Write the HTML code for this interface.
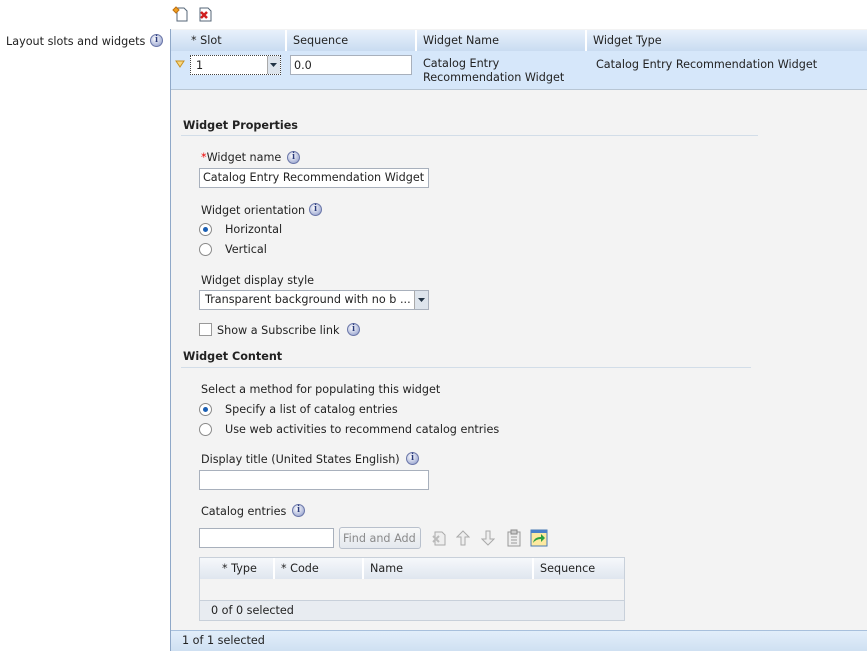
<!DOCTYPE html>
<html><head><meta charset="utf-8"><style>
*{margin:0;padding:0;box-sizing:border-box}
body{width:867px;height:651px;background:#fff;font-family:"DejaVu Sans","Liberation Sans",sans-serif;font-size:11.2px;line-height:15px;color:#222;position:relative;overflow:hidden}
.a{position:absolute;white-space:nowrap}
.info{position:absolute;width:13px;height:13px;border-radius:50%;background:radial-gradient(circle at 40% 35%,#fff,#aab4d8 70%,#6a78b0);border:1px solid #6a76a8}
.info:after{content:"i";position:absolute;left:0;right:0;top:-1px;line-height:12px;text-align:center;font:bold 10px "Liberation Serif",serif;color:#2a3a7a}
.inp{position:absolute;background:#fff;border:1px solid #a8b0bc;height:20px;padding:1px 3px;white-space:nowrap;overflow:hidden}
.hd{position:absolute;height:21px;background:linear-gradient(#e8f1fb,#c9dcf1);border-right:2px solid #fff;padding:3px 6px}
.hd2{position:absolute;height:21px;background:linear-gradient(#f6f8fb,#dfe6ef);border-right:2px solid #fff;padding:3px 6px}
.rad{position:absolute;width:13px;height:13px;border-radius:50%;border:1px solid #8a8a8a;background:#fff}
.rad.on:after{content:"";position:absolute;left:3px;top:3px;width:5px;height:5px;border-radius:50%;background:#1a5fb4}
.sec{position:absolute;font-weight:bold;left:183px}
.line{position:absolute;height:1px;background:#d2dde8}
</style></head><body>
<svg class="a" style="left:172px;top:6px" width="16" height="16"><path d="M5 2h7l3 3v10H5z" fill="#fff" stroke="#567"/><path d="M1 4l3-3 3 3-3 3z" fill="#f0a020" stroke="#c07010"/></svg>
<svg class="a" style="left:197px;top:6px" width="16" height="16"><path d="M3 2h8l3 3v10H3z" fill="#fff" stroke="#567"/><path d="M4 6l6 6M10 6l-6 6" stroke="#d02020" stroke-width="2.5"/></svg>
<div class="a" style="left:6px;top:34px">Layout slots and widgets</div>
<div class="info" style="left:150px;top:34px"></div>
<div class="a" style="left:170px;top:29px;width:697px;height:622px;background:#f3f3f3;border-left:1px solid #8fa8c8"></div>
<div class="hd" style="left:171px;top:30px;width:116px;padding-left:20px">* Slot</div>
<div class="hd" style="left:287px;top:30px;width:130px">Sequence</div>
<div class="hd" style="left:417px;top:30px;width:170px">Widget Name</div>
<div class="hd" style="left:587px;top:30px;width:280px;border-right:0">Widget Type</div>
<div class="a" style="left:171px;top:51px;width:696px;height:39px;background:#d6e7fa;border-bottom:1px solid #b8c6d4"></div>
<svg class="a" style="left:175px;top:60px" width="10" height="8"><path d="M1 1h8L5 7z" fill="#f8d880" stroke="#c89020"/></svg>
<div class="inp" style="left:190px;top:55px;width:91px;border:1px dotted #444;padding-left:5px;padding-top:2px">1</div>
<div class="a" style="left:267px;top:56px;width:13px;height:18px;background:#dde4ec;border-left:1px solid #aaa"></div>
<svg class="a" style="left:269px;top:62px" width="9" height="6"><path d="M1 1h7L4.5 5z" fill="#234"/></svg>
<div class="inp" style="left:290px;top:55px;width:122px;padding-top:2px">0.0</div>
<div class="a" style="left:423px;top:57px;line-height:14px">Catalog Entry<br>Recommendation Widget</div>
<div class="a" style="left:596px;top:57px">Catalog Entry Recommendation Widget</div>
<div class="sec" style="top:118px">Widget Properties</div>
<div class="line" style="left:181px;top:135px;width:577px"></div>
<div class="a" style="left:201px;top:150px"><span style="color:#e00">*</span>Widget name</div>
<div class="info" style="left:287px;top:151px"></div>
<div class="inp" style="left:199px;top:168px;width:230px">Catalog Entry Recommendation Widget</div>
<div class="a" style="left:201px;top:203px">Widget orientation</div>
<div class="info" style="left:309px;top:203px"></div>
<div class="rad on" style="left:199px;top:223px"></div><div class="a" style="left:225px;top:222px">Horizontal</div>
<div class="rad" style="left:199px;top:243px"></div><div class="a" style="left:225px;top:242px">Vertical</div>
<div class="a" style="left:201px;top:273px">Widget display style</div>
<div class="inp" style="left:199px;top:290px;width:230px;padding-left:5px">Transparent background with no b ...</div>
<div class="a" style="left:414px;top:291px;width:14px;height:18px;background:#dde4ec;border-left:1px solid #aaa"></div>
<svg class="a" style="left:417px;top:297px" width="9" height="6"><path d="M1 1h7L4.5 5z" fill="#234"/></svg>
<div class="a" style="left:199px;top:323px;width:13px;height:13px;border:1px solid #999;background:#fff"></div>
<div class="a" style="left:217px;top:323px">Show a Subscribe link</div>
<div class="info" style="left:347px;top:323px"></div>
<div class="sec" style="top:349px">Widget Content</div>
<div class="line" style="left:181px;top:367px;width:570px"></div>
<div class="a" style="left:201px;top:382px">Select a method for populating this widget</div>
<div class="rad on" style="left:199px;top:403px"></div><div class="a" style="left:225px;top:402px">Specify a list of catalog entries</div>
<div class="rad" style="left:199px;top:423px"></div><div class="a" style="left:225px;top:422px">Use web activities to recommend catalog entries</div>
<div class="a" style="left:201px;top:452px">Display title (United States English)</div>
<div class="info" style="left:406px;top:452px"></div>
<div class="inp" style="left:199px;top:470px;width:230px"></div>
<div class="a" style="left:201px;top:504px">Catalog entries</div>
<div class="info" style="left:292px;top:504px"></div>
<div class="inp" style="left:199px;top:528px;width:135px"></div>
<div class="a" style="left:339px;top:527px;width:82px;height:22px;border:1px solid #b8c0cc;border-radius:3px;background:linear-gradient(#f8f8f8,#e4e8ee);color:#8a8a8a;padding:3px 3px">Find and Add</div>
<svg class="a" style="left:431px;top:530px" width="16" height="16"><path d="M4 2h7l3 3v10H4z" fill="#eee" stroke="#aaa"/><path d="M2 6l6 6M8 6l-6 6" stroke="#bbb" stroke-width="2"/></svg>
<svg class="a" style="left:456px;top:530px" width="14" height="16"><path d="M7 1l6 6H9v8H5V7H1z" fill="#eee" stroke="#aaa"/></svg>
<svg class="a" style="left:481px;top:530px" width="14" height="16"><path d="M7 15l6-6H9V1H5v8H1z" fill="#eee" stroke="#aaa"/></svg>
<svg class="a" style="left:506px;top:529px" width="16" height="18"><rect x="2" y="3" width="12" height="14" fill="#eee" stroke="#999"/><path d="M5 1h6v4H5z" fill="#ccc" stroke="#888"/><path d="M5 8h6M5 11h6M5 14h6" stroke="#999"/></svg>
<svg class="a" style="left:530px;top:529px" width="18" height="18"><rect x="1" y="1" width="16" height="16" fill="#fde9a0" stroke="#4a7ab0"/><rect x="1" y="1" width="16" height="3" fill="#4a80c8"/><path d="M3 14q1-6 8-6V5l4 4-4 4v-3q-5 0-8 4z" fill="#2aa040"/></svg>
<div class="a" style="left:199px;top:557px;width:426px;height:64px;border:1px solid #c8d0da;background:#f3f3f3"></div>
<div class="hd2" style="left:200px;top:558px;width:75px;padding-left:22px">* Type</div>
<div class="hd2" style="left:275px;top:558px;width:89px">* Code</div>
<div class="hd2" style="left:364px;top:558px;width:170px">Name</div>
<div class="hd2" style="left:534px;top:558px;width:90px;border-right:0">Sequence</div>
<div class="a" style="left:200px;top:600px;width:424px;height:20px;background:#e8ecf1;border-top:1px solid #c8d0da;padding:2px 11px">0 of 0 selected</div>
<div class="a" style="left:171px;top:630px;width:696px;height:21px;background:linear-gradient(#e2eefa,#cfe0f2);border-top:1px solid #a8c0dc;padding:2px 11px">1 of 1 selected</div>
</body></html>
